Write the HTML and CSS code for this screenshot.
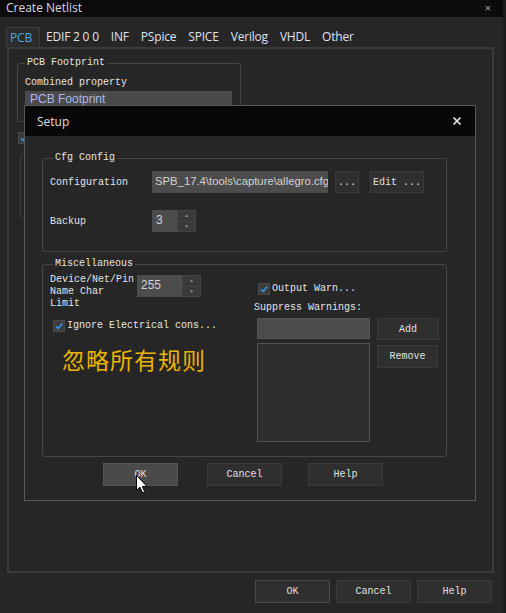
FILE: index.html
```html
<!DOCTYPE html>
<html lang="en">
<head>
    <meta charset="UTF-8">
    <title>Create Netlist</title>
    <link rel="stylesheet" href="styles.css">
</head>
<body>
    <div class="window">
        <div class="titlebar">
            <span>Create Netlist</span>
            <span class="top-close">×</span>
        </div>

        <div class="tabs">
            <span class="tab active">PCB</span>
            <span class="tab">EDIF 2 0 0</span>
            <span class="tab">INF</span>
            <span class="tab">PSpice</span>
            <span class="tab">SPICE</span>
            <span class="tab">Verilog</span>
            <span class="tab">VHDL</span>
            <span class="tab">Other</span>
        </div>

        <div class="panel">
            <fieldset class="group footprint">
                <legend>PCB Footprint</legend>
                <div class="label">Combined property</div>
                <div class="field selected">PCB Footprint</div>
            </fieldset>
            <span class="check behind">
                <svg viewBox="0 0 12 12"><polyline points="2.5,6.5 5,9 10,3"/></svg>
            </span>
            <div class="group-box"></div>
        </div>

        <div class="footer">
            <button class="btn default">OK</button>
            <button class="btn">Cancel</button>
            <button class="btn">Help</button>
        </div>

        <!-- Setup dialog sits over the netlist window -->
        <div class="dialog">
            <div class="dialog-title">
                <span>Setup</span>
                <svg class="close" viewBox="0 0 10 10"><path d="M1.5 1.5 L8.5 8.5 M8.5 1.5 L1.5 8.5"/></svg>
            </div>
            <div class="dialog-body">
                <fieldset class="group cfg">
                    <legend>Cfg Config</legend>
                    <div class="row">
                        <span class="row-label">Configuration</span>
                        <div class="field path">SPB_17.4\tools\capture\allegro.cfg</div>
                        <button class="btn small dots">...</button>
                        <button class="btn small edit">Edit ...</button>
                    </div>
                    <div class="row">
                        <span class="row-label">Backup</span>
                        <div class="spin">
                            <div class="spin-value backup">3</div>
                            <div class="spin-arrows"><span>▲</span><span>▼</span></div>
                        </div>
                    </div>
                </fieldset>

                <fieldset class="group misc">
                    <legend>Miscellaneous</legend>
                    <div class="misc-cols">
                        <div class="misc-left">
                            <div class="limit">
                                <div class="limit-label">Device/Net/Pin<br>Name Char<br>Limit</div>
                                <div class="spin">
                                    <div class="spin-value wide">255</div>
                                    <div class="spin-arrows"><span>▲</span><span>▼</span></div>
                                </div>
                            </div>
                            <label class="check-row ignore">
                                <span class="check">
                                    <svg viewBox="0 0 12 12"><polyline points="2.5,6.5 5,9 10,3"/></svg>
                                </span>
                                Ignore Electrical cons...
                            </label>
                            <div class="note">忽略所有规则</div>
                        </div>
                        <div class="misc-right">
                            <label class="check-row output">
                                <span class="check">
                                    <svg viewBox="0 0 12 12"><polyline points="2.5,6.5 5,9 10,3"/></svg>
                                </span>
                                Output Warn...
                            </label>
                            <div class="suppress">Suppress Warnings:</div>
                            <div class="suppress-grid">
                                <div class="suppress-inputs">
                                    <div class="field warn-input"></div>
                                    <div class="listbox"></div>
                                </div>
                                <div class="suppress-btns">
                                    <button class="btn add">Add</button>
                                    <button class="btn remove">Remove</button>
                                </div>
                            </div>
                        </div>
                    </div>
                </fieldset>

                <div class="dialog-buttons">
                    <button class="btn hover">OK</button>
                    <button class="btn">Cancel</button>
                    <button class="btn">Help</button>
                </div>
            </div>
        </div>

        <svg class="pointer" viewBox="0 0 12 19">
            <path d="M0.5 0.5 L0.5 15.5 L4 12.2 L6.6 18 L8.8 17 L6.3 11.4 L11 11.4 Z"/>
        </svg>
    </div>
</body>
</html>
```

FILE: styles.css
```css
* {
    box-sizing: border-box;
}

body {
    margin: 0;
    background: #262626;
    font-family: "Liberation Mono", monospace;
    font-size: 10px;
    color: #e4e4e4;
}

.window {
    position: relative;
    width: 506px;
    height: 613px;
    overflow: hidden;
    background: #262626;
    border-right: 3px solid #1c1c1c;
}

.titlebar {
    height: 17px;
    background: #0b0b0b;
    padding-left: 6px;
    font-family: "Open Sans", sans-serif;
    font-size: 12px;
    line-height: 15px;
    color: #d6d6e8;
    display: flex;
    justify-content: space-between;
}

.top-close {
    margin-right: 12px;
    font-size: 11px;
    line-height: 15px;
    color: #aaa;
}

.tabs {
    display: flex;
    margin-top: 10px;
    padding-left: 6px;
    height: 20px;
    font-family: "Open Sans", sans-serif;
    font-size: 12px;
    letter-spacing: -0.2px;
}

.tab {
    padding: 0 6px;
    line-height: 20px;
    color: #dfe2f0;
}

.tab.active {
    background: #2c2c2c;
    border: 1px solid #3d3d3d;
    border-bottom: none;
    color: #4aa6e8;
    padding: 0 6px 0 3px;
    width: 34px;
    line-height: 19px;
}

.panel {
    margin-left: 7px;
    width: 487px;
    height: 526px;
    border: 2px solid #3b3b3b;
    padding: 8px 0 0 8px;
}

.group {
    margin: 0;
    border: 1px solid #454545;
    border-radius: 3px;
    padding: 7px;
    min-width: 0;
}

.group legend {
    padding: 0 2px;
    margin-left: 3px;
    line-height: 12px;
}

.footprint {
    width: 224px;
    height: 65px;
    padding: 7px 8px 0 7px;
}

.footprint legend {
    margin-left: 0;
}

.label {
    line-height: 13px;
}

.field {
    background: #4c4c4c;
}

.field.selected {
    margin-top: 2px;
    height: 16px;
    width: 207px;
    padding-left: 5px;
    font-family: "Liberation Sans", sans-serif;
    font-size: 12px;
    line-height: 16px;
    color: #a9b9f0;
    background: #4a4a4a;
}

.check {
    display: inline-block;
    width: 12px;
    height: 12px;
    background: #3c3c3c;
    border: 1px solid #4a4a4a;
}

.check svg {
    display: block;
    width: 10px;
    height: 10px;
    fill: none;
    stroke: #2e95e6;
    stroke-width: 2;
}

.check.behind {
    display: block;
    margin: 10px 0 0 1px;
}

.group-box {
    margin: 9px 0 0 3px;
    width: 160px;
    height: 66px;
    border: 1px solid #3c3c3c;
    border-radius: 3px;
}

.footer {
    display: flex;
    justify-content: flex-end;
    margin-top: 7px;
    padding-right: 11px;
    gap: 6px;
}

.btn {
    font-family: "Liberation Mono", monospace;
    font-size: 10px;
    color: #e0e0e0;
    background: #2f2f2f;
    border: 1px solid #3a3a3a;
    padding: 0;
    height: 23px;
    width: 75px;
}

.footer .btn.default {
    border-color: #4a4a4a;
}

/* Setup dialog */
.dialog {
    position: absolute;
    left: 24px;
    top: 105px;
    width: 452px;
    height: 396px;
    background: #262626;
    border: 1px solid #595959;
}

.dialog-title {
    height: 30px;
    background: #080808;
    padding: 0 13px 0 12px;
    display: flex;
    align-items: center;
    justify-content: space-between;
    font-family: "Open Sans", sans-serif;
    font-size: 12px;
    color: #e0dcd8;
}

.close {
    width: 10px;
    height: 10px;
    stroke: #e6e6e6;
    stroke-width: 1.7;
}

.dialog-body {
    padding: 16px 0 0 17px;
}

.cfg {
    width: 405px;
    padding: 7px 7px 19px 7px;
}

.row {
    display: flex;
    align-items: center;
    height: 22px;
}

.row + .row {
    margin-top: 17px;
}

.row-label {
    width: 102px;
}

.field.path {
    width: 176px;
    height: 22px;
    padding-left: 3px;
    font-family: "Liberation Sans", sans-serif;
    font-size: 11.3px;
    line-height: 21px;
    color: #d2d2d2;
    white-space: nowrap;
    overflow: hidden;
}

.btn.small {
    height: 22px;
}

.btn.dots {
    width: 24px;
    margin-left: 7px;
}

.btn.edit {
    width: 54px;
    margin-left: 11px;
}

.spin {
    display: flex;
    height: 22px;
}

.spin-value {
    background: #4c4c4c;
    font-family: "Liberation Sans", sans-serif;
    font-size: 12px;
    line-height: 20px;
    padding-left: 4px;
    color: #d2d2d2;
}

.spin-value.backup {
    width: 25px;
}

.spin-value.wide {
    width: 45px;
}

.spin-arrows {
    width: 19px;
    background: #393939;
    border: 1px solid #444;
    display: flex;
    flex-direction: column;
    font-size: 5px;
    color: #8a8a8a;
    text-align: center;
}

.spin-arrows span {
    flex: 1;
    line-height: 10px;
}

.spin-arrows span + span {
    border-top: 1px solid #444;
}

.misc {
    margin-top: 6px;
    width: 405px;
    height: 199px;
    padding: 3px 0 0 7px;
}

.misc-cols {
    display: flex;
}

.misc-left {
    width: 204px;
}

.limit {
    display: flex;
}

.limit-label {
    width: 87px;
    line-height: 12px;
    margin-top: 1px;
}

.limit .spin {
    margin-top: 2px;
}

.check-row {
    display: flex;
    align-items: center;
    gap: 2px;
    height: 13px;
}

.ignore {
    margin: 9px 0 0 3px;
}

.note {
    margin: 14px 0 0 12px;
    font-family: "Noto Sans CJK SC", sans-serif;
    font-size: 23px;
    line-height: 26px;
    color: #eab400;
    letter-spacing: 1px;
}

.output {
    margin: 9px 0 0 4px;
}

.suppress {
    margin-top: 7px;
    line-height: 12px;
}

.suppress-grid {
    display: flex;
    gap: 7px;
    margin-top: 4px;
    padding-left: 3px;
}

.suppress-inputs {
    width: 113px;
}

.field.warn-input {
    height: 21px;
    border: 1px solid #555;
}

.listbox {
    margin-top: 4px;
    height: 99px;
    background: #2d2d2d;
    border: 1px solid #525252;
}

.suppress-btns {
    display: flex;
    flex-direction: column;
    gap: 5px;
}

.btn.add {
    width: 62px;
    height: 22px;
}

.btn.remove {
    width: 61px;
    height: 23px;
}

.dialog-buttons {
    display: flex;
    margin-top: 6px;
    padding-left: 61px;
}

.dialog-buttons .btn + .btn {
    margin-left: 29px;
}

.dialog-buttons .btn + .btn + .btn {
    margin-left: 26px;
}

.btn.hover {
    background: #4a4a4a;
    border-color: #555;
}

.pointer {
    position: absolute;
    left: 136px;
    top: 475px;
    width: 12px;
    height: 19px;
    fill: #fff;
    stroke: #000;
    stroke-width: 1;
}
```
